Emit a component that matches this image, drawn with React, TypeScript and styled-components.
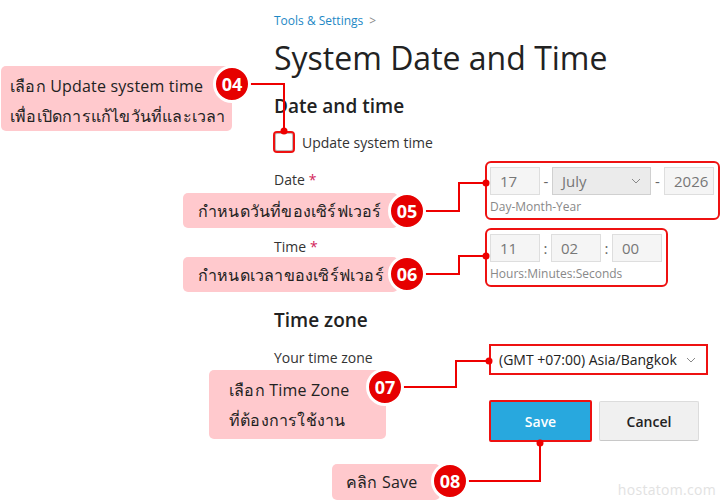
import React from 'react';
import styled, { createGlobalStyle } from 'styled-components';

const GlobalStyle = createGlobalStyle`
    html, body{
        margin: 0;
        padding: 0;
        background: #fff;
    }
    body{
        font-family: "Open Sans", "Noto Sans", "DejaVu Sans", sans-serif;
        color: #222;
    }
`;

const Screen = styled.div`
    position: relative;
    width: 720px;
    height: 500px;
    overflow: hidden;
    background: #fff;
`;

const Page = styled.div`
    padding: 12px 0 0 274px;
    display: flex;
    flex-direction: column;
`;

const Breadcrumb = styled.div`
    display: flex;
    align-items: center;
    gap: 6px;
    font-size: 12px;
    line-height: 18px;
    color: #1d88c5;
    > span{
        color: #888;
        font-size: 12px;
    }
`;

const Title = styled.h1`
    margin: 6px 0 0 0;
    font-size: 32px;
    line-height: 44px;
    font-weight: 400;
    color: #222;
`;

const SectionTitle = styled.h2<{ gap: number }>`
    margin: ${props => props.gap}px 0 0 0;
    font-size: 19px;
    line-height: 26px;
    font-weight: 600;
    color: #222;
`;

const CheckRow = styled.label`
    margin-top: 12px;
    margin-left: -1px;
    display: flex;
    align-items: center;
    gap: 7px;
    font-size: 14px;
    color: #333;
`;

const CheckBox = styled.span`
    display: block;
    flex: none;
    width: 18px;
    height: 18px;
    border: 2px solid #ee1111;
    border-radius: 4px;
    background: #fff;
    box-shadow: inset 0 0 0 1px #bbb;
`;

const FieldRow = styled.div<{ top: number }>`
    margin-top: ${props => props.top}px;
    display: grid;
    grid-template-columns: 215px auto;
    align-items: start;
`;

const Label = styled.div<{ pad: number }>`
    padding-top: ${props => props.pad}px;
    font-size: 14px;
    line-height: 18px;
    color: #333;
    > em{
        font-style: normal;
        color: #d2245a;
        margin-left: 4px;
    }
`;

const Highlight = styled.div`
    margin-left: -4px;
    justify-self: start;
    border: 2px solid #ee1111;
    border-radius: 6px;
    padding: 4px 4px 2px 3px;
    background: #fff;
`;

const Inputs = styled.div`
    display: flex;
    align-items: center;
`;

const Input = styled.div<{ w: number }>`
    width: ${props => props.w}px;
    height: 28px;
    box-sizing: border-box;
    border: 1px solid #dedede;
    background: #f5f5f5;
    font-size: 15px;
    line-height: 26px;
    color: #777;
    padding-left: 9px;
`;

const Select = styled.div<{ w: number }>`
    width: ${props => props.w}px;
    height: 28px;
    box-sizing: border-box;
    border: 1px solid #d0d0d0;
    background: #ebebeb;
    font-size: 15px;
    line-height: 26px;
    color: #777;
    padding: 0 9px;
    display: flex;
    align-items: center;
    justify-content: space-between;
`;

const Sep = styled.span<{ w: number }>`
    width: ${props => props.w}px;
    text-align: center;
    font-size: 15px;
    color: #666;
`;

const Hint = styled.div`
    margin-top: 3px;
    font-size: 12px;
    line-height: 18px;
    color: #888;
`;

const ZoneSelect = styled.div`
    width: 219px;
    height: 31px;
    box-sizing: border-box;
    border: 2px solid #ee1111;
    background: #fff;
    padding: 0 10px 0 8px;
    display: flex;
    align-items: center;
    justify-content: space-between;
    font-size: 14px;
    color: #222;
`;

const Actions = styled.div`
    margin: 25px 0 0 215px;
    display: flex;
    gap: 7px;
    align-items: center;
`;

const Button = styled.button<{ primary?: boolean }>`
    width: ${props => props.primary ? 103 : 100}px;
    height: ${props => props.primary ? 42 : 40}px;
    box-sizing: border-box;
    font-family: inherit;
    font-size: 14px;
    font-weight: 600;
    border-radius: 2px;
    cursor: pointer;
    color: ${props => props.primary ? "#fff" : "#222"};
    background: ${props => props.primary ? "#28a8de" : "#f0f0f0"};
    border: ${props => props.primary ? "2px solid #ee1111" : "1px solid #dcdcdc"};
    border-bottom-color: ${props => props.primary ? "#ee1111" : "#c8c8c8"};
`;

/* annotation layer */

const Note = styled.div<{ x: number; y: number; w: number; h: number; padX: number }>`
    position: absolute;
    left: ${props => props.x}px;
    top: ${props => props.y}px;
    width: ${props => props.w}px;
    height: ${props => props.h}px;
    box-sizing: border-box;
    padding: 5px 0 0 ${props => props.padX}px;
    background: #ffc9cd;
    border-radius: 5px;
    font-size: 16px;
    line-height: 30px;
    color: #222;
    letter-spacing: 0.2px;
`;

const OneLineNote = styled(Note)`
    display: flex;
    align-items: center;
    padding-top: 0;
`;

const Badge = styled.div<{ cx: number; cy: number }>`
    position: absolute;
    left: ${props => props.cx - 19}px;
    top: ${props => props.cy - 19}px;
    width: 32px;
    height: 32px;
    border: 3px solid #fff;
    border-radius: 50%;
    background: #e60000;
    color: #fff;
    font-size: 18px;
    font-weight: 700;
    display: flex;
    align-items: center;
    justify-content: center;
    line-height: 1;
`;

const Wires = styled.svg`
    position: absolute;
    left: 0;
    top: 0;
    pointer-events: none;
`;

const Watermark = styled.div`
    position: absolute;
    right: 4px;
    bottom: 2px;
    font-size: 14px;
    line-height: 16px;
    color: #e2e2e2;
    letter-spacing: 0.3px;
`;

const Chevron: React.FC = () => (
    <svg width="10" height="6" viewBox="0 0 10 6">
        <path d="M1 1l4 4 4-4" fill="none" stroke="#888" strokeWidth="1" />
    </svg>
);

const wires: { pts: string; dot: [number, number] }[] = [
    { pts: "250,84 284,84 284,131", dot: [284, 131] },
    { pts: "425,211 459,211 459,183 486,183", dot: [486, 183] },
    { pts: "425,274 459,274 459,256 486,256", dot: [486, 256] },
    { pts: "403,387 456,387 456,361 489,361", dot: [489, 361] },
    { pts: "468,481 540,481 540,443", dot: [540, 443] },
];

const App: React.FC = () => {
    return (
    <Screen>
        <GlobalStyle />
        <Page>
            <Breadcrumb>Tools &amp; Settings <span>&gt;</span></Breadcrumb>
            <Title>System Date and Time</Title>
            <SectionTitle gap={13}>Date and time</SectionTitle>
            <CheckRow><CheckBox />Update system time</CheckRow>

            <FieldRow top={8}>
                <Label pad={10}>Date<em>*</em></Label>
                <Highlight>
                    <Inputs>
                        <Input w={50}>17</Input>
                        <Sep w={12}>-</Sep>
                        <Select w={99}>July <Chevron /></Select>
                        <Sep w={13}>-</Sep>
                        <Input w={50}>2026</Input>
                    </Inputs>
                    <Hint>Day-Month-Year</Hint>
                </Highlight>
            </FieldRow>

            <FieldRow top={8}>
                <Label pad={10}>Time<em>*</em></Label>
                <Highlight>
                    <Inputs>
                        <Input w={50}>11</Input>
                        <Sep w={11}>:</Sep>
                        <Input w={50}>02</Input>
                        <Sep w={11}>:</Sep>
                        <Input w={50}>00</Input>
                    </Inputs>
                    <Hint>Hours:Minutes:Seconds</Hint>
                </Highlight>
            </FieldRow>

            <SectionTitle gap={20}>Time zone</SectionTitle>

            <FieldRow top={11}>
                <Label pad={5}>Your time zone</Label>
                <ZoneSelect>(GMT +07:00) Asia/Bangkok <Chevron /></ZoneSelect>
            </FieldRow>

            <Actions>
                <Button primary>Save</Button>
                <Button>Cancel</Button>
            </Actions>
        </Page>

        <Wires width="720" height="500">
            {wires.map((w, i) => (
                <g key={i}>
                    <polyline points={w.pts} fill="none" stroke="#ee0000" strokeWidth="2" />
                    <circle cx={w.dot[0]} cy={w.dot[1]} r="3.5" fill="#ee0000" />
                </g>
            ))}
        </Wires>

        <Note x={1} y={66} w={231} h={65} padX={9}>
            เลือก Update system time<br />เพื่อเปิดการแก้ไขวันที่และเวลา
        </Note>
        <Badge cx={232} cy={84}>04</Badge>

        <OneLineNote x={183} y={193} w={215} h={35} padX={15}>กำหนดวันที่ของเซิร์ฟเวอร์</OneLineNote>
        <Badge cx={407} cy={211}>05</Badge>

        <OneLineNote x={183} y={257} w={215} h={35} padX={15}>กำหนดเวลาของเซิร์ฟเวอร์</OneLineNote>
        <Badge cx={407} cy={274}>06</Badge>

        <Note x={209} y={370} w={177} h={69} padX={20}>
            เลือก Time Zone<br />ที่ต้องการใช้งาน
        </Note>
        <Badge cx={385} cy={387}>07</Badge>

        <OneLineNote x={332} y={464} w={108} h={36} padX={14}>คลิก Save</OneLineNote>
        <Badge cx={450} cy={481}>08</Badge>

        <Watermark>hostatom.com</Watermark>
    </Screen>
  );
};

export default App;
